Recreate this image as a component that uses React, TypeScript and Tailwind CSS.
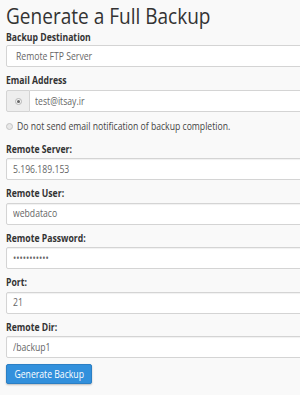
import React from "react";

const font = { fontFamily: '"Open Sans", "Noto Sans", sans-serif' };

function T({ children }: { children: React.ReactNode }) {
  return <span className="inline-block origin-left scale-x-[0.865] whitespace-nowrap">{children}</span>;
}

function Label({ children, className = "" }: { children: React.ReactNode; className?: string }) {
  return (
    <div className={"h-[14px] text-[10px] font-bold leading-[14px] text-[#333] " + className}>
      <T>{children}</T>
    </div>
  );
}

function Field({ label, value }: { label: string; value: string }) {
  return (
    <div className="flex flex-col mb-[6px]">
      <Label className="mb-[2.5px]">{label}</Label>
      <div className="h-[22px] w-[310px] border border-[#d4d4d4] rounded-[2px] bg-white flex items-center pl-[6px] text-[10px] text-[#666] shadow-[inset_0_1px_1px_rgba(0,0,0,0.06)]">
        <T>{value}</T>
      </div>
    </div>
  );
}

export default function App() {
  return (
    <div className="w-[300px] h-[395px] overflow-hidden bg-[#f9f9f9] pl-[6px] pt-[0.5px]" style={font}>
      <div className="h-[28px] text-[22px] leading-[28px] text-[#333] mb-[1.5px]">
        <T>Generate a Full Backup</T>
      </div>
      <Label className="mb-[1px]">Backup Destination</Label>
      <div className="h-[22px] w-[310px] border border-[#d4d4d4] rounded-[2px] bg-white flex items-center pl-[9px] text-[10px] text-[#666]">
        <T>Remote FTP Server</T>
      </div>
      <Label className="mt-[6px] mb-[3px]">Email Address</Label>
      <div className="flex h-[22px] w-[310px]">
        <div className="w-[24px] border border-[#d4d4d4] bg-[#eee] rounded-l-[2px] flex items-center justify-center">
          <div className="w-[7px] h-[7px] rounded-full border border-[#b5b5b5] bg-[#f4f4f4] flex items-center justify-center">
            <div className="w-[3px] h-[3px] rounded-full bg-[#666]" />
          </div>
        </div>
        <div className="flex-1 border border-l-0 border-[#d4d4d4] bg-white flex items-center pl-[5px] text-[10px] text-[#666]">
          <T>test@itsay.ir</T>
        </div>
      </div>
      <div className="flex items-center mt-[7px] h-[14px] text-[10px] leading-[14px] text-[#444] mb-[8.5px]">
        <div className="w-[7px] h-[7px] rounded-full border border-[#c4c4c4] bg-[#e8e8e8] mr-[4px] shrink-0" />
        <T>Do not send email notification of backup completion.</T>
      </div>
      <Field label="Remote Server:" value="5.196.189.153" />
      <Field label="Remote User:" value="webdataco" />
      <Field label="Remote Password:" value="•••••••••••" />
      <Field label="Port:" value="21" />
      <Field label="Remote Dir:" value="/backup1" />
      <button className="mt-[4px] h-[20px] w-[86px] bg-[#3290dc] border border-[#2b7fc4] rounded-[2px] text-white text-[10px] flex items-center justify-center shadow-[0_1px_2px_rgba(0,0,0,0.25)]">
        <span className="inline-block origin-center scale-x-[0.865] whitespace-nowrap">Generate Backup</span>
      </button>
    </div>
  );
}
